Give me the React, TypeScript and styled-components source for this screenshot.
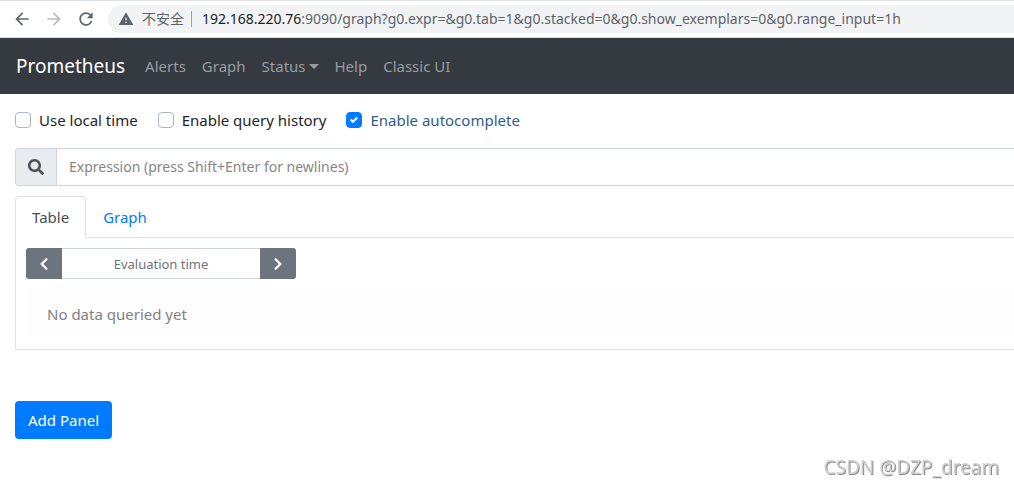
import React, { useState } from "react";
import styled, { createGlobalStyle } from "styled-components";
import { FaChevronLeft, FaChevronRight, FaSearch } from "react-icons/fa";
import { MdArrowBack, MdArrowForward, MdRefresh, MdWarning } from "react-icons/md";

const GlobalStyle = createGlobalStyle`
  *, *::before, *::after { box-sizing: border-box; }
  body {
    margin: 0;
    background: #fff;
    color: #212529;
    font-family: "Noto Sans", "Noto Sans CJK SC", sans-serif;
    font-size: 15px;
    line-height: 24px;
    overflow-x: hidden;
  }
  button, input { font: inherit; margin: 0; }
  button { cursor: pointer; }
`;

const BrowserBar = styled.header`
  display: flex;
  align-items: center;
  height: 38px;
  padding-left: 12px;
  border-top: 1px solid #dee1e6;
  border-bottom: 1px solid #dadce0;
`;

const BrowserButton = styled.button`
  display: flex;
  padding: 0;
  margin-right: 12px;
  border: 0;
  background: none;
  color: #5f6368;
  font-size: 20px;

  &:disabled { color: #babcbe; }
`;

const AddressBar = styled.div`
  display: flex;
  flex: 1;
  align-items: center;
  height: 28px;
  padding-left: 10px;
  border-radius: 14px 0 0 14px;
  background: #f1f3f4;
  color: #5f6368;
  font-size: 14px;
  white-space: nowrap;
`;

const SiteInfo = styled.button`
  display: flex;
  align-items: center;
  gap: 8px;
  padding: 0 7px 0 0;
  border: 0;
  border-right: 1px solid #9aa0a6;
  background: none;
  color: inherit;
  line-height: 16px;

  svg { font-size: 16px; }
`;

const Url = styled.span`
  margin-left: 10px;
`;

const UrlHost = styled.span`
  color: #202124;
`;

const Navbar = styled.nav`
  display: flex;
  align-items: center;
  min-height: 56px;
  padding: 8px 16px;
  background: #343a40;
`;

const Brand = styled.a`
  margin-right: 12px;
  color: #fff;
  font-size: 19px;
  text-decoration: none;
`;

const NavLink = styled.a`
  display: flex;
  align-items: center;
  padding: 8px;
  color: #999c9f;
  text-decoration: none;
`;

const Caret = styled.span`
  margin-left: 3px;
  border: 5px solid transparent;
  border-top-color: currentColor;
  border-bottom: 0;
`;

const Content = styled.main`
  padding: 14px 0 0 15px;
`;

const Options = styled.div`
  display: flex;
  gap: 20px;
  margin-bottom: 16px;
`;

const Option = styled.label<{ $active: boolean }>`
  display: flex;
  align-items: center;
  gap: 8px;
  color: ${(p) => (p.$active ? "#2f5d8c" : "#212529")};
`;

const CheckWrap = styled.span`
  position: relative;
  display: flex;

  svg {
    position: absolute;
    inset: 4px;
    pointer-events: none;
  }
`;

const Checkbox = styled.input`
  appearance: none;
  width: 16px;
  height: 16px;
  border: 1px solid #adb5bd;
  border-radius: 4px;
  background: #fff;

  &:checked {
    border-color: #007bff;
    background: #007bff;
  }
`;

const SearchGroup = styled.div`
  display: flex;
  height: 38px;
  margin-bottom: 10px;
  border: 1px solid #ced4da;
  border-right: 0;
  border-radius: 4px 0 0 4px;
  overflow: hidden;
`;

const SearchIcon = styled.label`
  display: flex;
  align-items: center;
  padding: 0 12px;
  border-right: 1px solid #ced4da;
  background: #e9ecef;
  color: #495057;
  font-size: 16px;
`;

const ExpressionInput = styled.input`
  flex: 1;
  min-width: 0;
  padding: 0 12px;
  border: 0;
  outline: 0;
  color: #495057;
  font-size: 14px;

  &::placeholder { color: #868686; opacity: 1; }
`;

const Tabs = styled.div`
  display: flex;
  border-bottom: 1px solid #dee2e6;
`;

const Tab = styled.button<{ $active: boolean }>`
  height: 42px;
  margin-bottom: -1px;
  padding: 0 16px;
  border: 1px solid;
  border-color: ${(p) => (p.$active ? "#dee2e6 #dee2e6 #fff" : "transparent")};
  border-radius: 4px 4px 0 0;
  background: ${(p) => (p.$active ? "#fff" : "none")};
  color: ${(p) => (p.$active ? "#495057" : "#007bff")};
`;

const TabPanel = styled.section`
  padding: 10px 0 10px 10px;
  border: 1px solid #dee2e6;
  border-width: 0 0 1px 1px;
`;

const TimeGroup = styled.div`
  display: flex;
  width: 270px;
  height: 31px;
  border-radius: 3px;
  overflow: hidden;
`;

const TimeButton = styled.button`
  display: flex;
  align-items: center;
  justify-content: center;
  width: 36px;
  padding: 0;
  border: 0;
  background: #6c757d;
  color: #fff;
  font-size: 14px;
`;

const TimeInput = styled.input`
  flex: 1;
  min-width: 0;
  border: 1px solid #ced4da;
  border-width: 1px 0;
  outline: 0;
  font-size: 13px;
  text-align: center;

  &::placeholder { color: #6c757d; opacity: 1; }
`;

const EmptyNotice = styled.div`
  margin-top: 10px;
  padding: 13px 21px;
  border-radius: 4px 0 0 4px;
  background: #fefefe;
  color: #818182;
`;

const AddPanelButton = styled.button`
  height: 38px;
  margin-top: 51px;
  padding: 0 13px;
  border: 0;
  border-radius: 4px;
  background: #007bff;
  color: #fff;
`;

const Watermark = styled.div`
  position: fixed;
  right: 15px;
  bottom: 6px;
  color: #d0d0d0;
  font-size: 19px;
  line-height: 28px;
  text-shadow: 1px 1px 0 #8c8c8c;
`;

function CheckOption({ label, initial = false }: { label: string; initial?: boolean }) {
  const [checked, setChecked] = useState(initial);
  return (
    <Option $active={checked}>
      <CheckWrap>
        <Checkbox type="checkbox" checked={checked} onChange={(e) => setChecked(e.target.checked)} />
        {checked && (
          <svg width="8" height="8" viewBox="0 0 8 8" aria-hidden="true">
            <path fill="#fff" d="M6.564.75l-3.59 3.612-1.538-1.55L0 4.26l2.974 2.99L8 2.193z" />
          </svg>
        )}
      </CheckWrap>
      {label}
    </Option>
  );
}

export default function App() {
  const [tab, setTab] = useState("Table");
  return (
    <>
      <GlobalStyle />
      <BrowserBar>
        <BrowserButton aria-label="Back"><MdArrowBack /></BrowserButton>
        <BrowserButton aria-label="Forward" disabled><MdArrowForward /></BrowserButton>
        <BrowserButton aria-label="Reload"><MdRefresh /></BrowserButton>
        <AddressBar>
          <SiteInfo><MdWarning />不安全</SiteInfo>
          <Url>
            <UrlHost>192.168.220.76</UrlHost>
            :9090/graph?g0.expr=&amp;g0.tab=1&amp;g0.stacked=0&amp;g0.show_exemplars=0&amp;g0.range_input=1h
          </Url>
        </AddressBar>
      </BrowserBar>
      <Navbar>
        <Brand href="#">Prometheus</Brand>
        <NavLink href="#alerts">Alerts</NavLink>
        <NavLink href="#graph">Graph</NavLink>
        <NavLink href="#status">Status<Caret /></NavLink>
        <NavLink href="#help">Help</NavLink>
        <NavLink href="#classic">Classic UI</NavLink>
      </Navbar>
      <Content>
        <Options>
          <CheckOption label="Use local time" />
          <CheckOption label="Enable query history" />
          <CheckOption label="Enable autocomplete" initial />
        </Options>
        <SearchGroup>
          <SearchIcon htmlFor="expression" aria-label="Expression"><FaSearch /></SearchIcon>
          <ExpressionInput id="expression" placeholder="Expression (press Shift+Enter for newlines)" />
        </SearchGroup>
        <Tabs role="tablist">
          {["Table", "Graph"].map((name) => (
            <Tab key={name} role="tab" aria-selected={tab === name} $active={tab === name} onClick={() => setTab(name)}>
              {name}
            </Tab>
          ))}
        </Tabs>
        <TabPanel role="tabpanel">
          <TimeGroup>
            <TimeButton aria-label="Earlier"><FaChevronLeft /></TimeButton>
            <TimeInput aria-label="Evaluation time" placeholder="Evaluation time" />
            <TimeButton aria-label="Later"><FaChevronRight /></TimeButton>
          </TimeGroup>
          <EmptyNotice>No data queried yet</EmptyNotice>
        </TabPanel>
        <AddPanelButton>Add Panel</AddPanelButton>
      </Content>
      <Watermark>CSDN @DZP_dream</Watermark>
    </>
  );
}
